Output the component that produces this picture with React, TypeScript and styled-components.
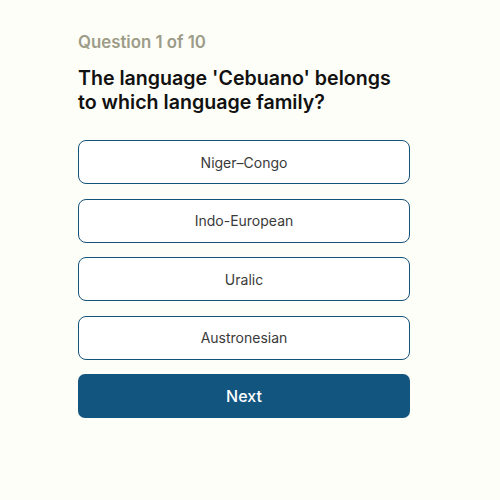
import React from "react";
import styled, { createGlobalStyle } from "styled-components";

const Global = createGlobalStyle`
  html, body { margin: 0; padding: 0; background: #fefef8; }
  body { font-family: Inter, "Noto Sans", sans-serif; }
`;

const Page = styled.div`
  width: 500px;
  height: 500px;
  box-sizing: border-box;
  padding: 32px 90px 0 78px;
  display: flex;
  flex-direction: column;
`;

const Label = styled.div`
  font-size: 16.8px;
  font-weight: 600;
  color: #9c9c88;
  line-height: 20px;
`;

const Title = styled.h1`
  margin: 14px 0 26px;
  font-size: 19.6px;
  font-weight: 600;
  line-height: 24px;
  color: #111;
`;

const Options = styled.div`
  display: flex;
  flex-direction: column;
  gap: 14.5px;
`;

const Option = styled.button`
  height: 44px;
  box-sizing: border-box;
  border: 1.8px solid #15527a;
  border-radius: 8px;
  background: #fff;
  font-family: Inter, "Noto Sans", sans-serif;
  font-size: 14px;
  color: #3a3a3a;
  cursor: pointer;
`;

const Next = styled.button`
  height: 44px;
  border: none;
  border-radius: 7px;
  background: #12557f;
  color: #fff;
  font-family: Inter, "Noto Sans", sans-serif;
  font-size: 16px;
  font-weight: 500;
  cursor: pointer;
`;

const options = ["Niger–Congo", "Indo-European", "Uralic", "Austronesian"];

export default function App() {
  return (
    <>
      <Global />
      <Page>
        <Label>Question 1 of 10</Label>
        <Title>
          The language 'Cebuano' belongs
          <br />
          to which language family?
        </Title>
        <Options>
          {options.map((o) => (
            <Option key={o}>{o}</Option>
          ))}
          <Next>Next</Next>
        </Options>
      </Page>
    </>
  );
}
